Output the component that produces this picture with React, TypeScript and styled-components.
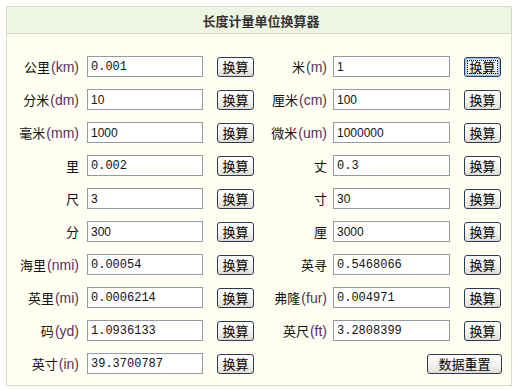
import styled, { createGlobalStyle, css } from 'styled-components';

const GlobalStyle = createGlobalStyle`
    html, body {
        margin: 0;
        padding: 0;
        background: #ffffff;
    }
`;

const Page = styled.div`
    padding: 6px 11px 0 6px;
    font-family: 'Liberation Sans', 'Noto Sans CJK SC', sans-serif;
`;

const Panel = styled.div`
    width: 504px;
    border: 1px solid #d3dcc8;
    background: #fffff2;
`;

const Header = styled.div`
    height: 26px;
    display: flex;
    align-items: center;
    justify-content: center;
    background: #eef6e2;
    border-bottom: 1px solid #cfdcc0;
    font-size: 13px;
    font-weight: bold;
    color: #333333;
    padding-left: 4px;
`;

const Grid = styled.div`
    display: grid;
    grid-template-columns: 80px 130px 41px 75px 131px 1fr;
    grid-auto-rows: 21px;
    row-gap: 12px;
    align-items: center;
    padding: 22px 0 11px 0;
`;

const Label = styled.div<{ $pad: number }>`
    text-align: right;
    padding-right: ${({ $pad }) => $pad}px;
    font-size: 13px;
    color: #111111;
    white-space: nowrap;
`;

const Unit = styled.span`
    color: #5c2e5c;
    font-size: 14px;
    margin-left: 1px;
`;

const Input = styled.input<{ $mono: boolean; $w: number }>`
    box-sizing: border-box;
    width: ${({ $w }) => $w}px;
    height: 21px;
    border: 1px solid #8f9ba6;
    background: #ffffff;
    padding: 0 3px;
    margin: 0;
    font-size: 12px;
    color: #111111;
    font-family: ${({ $mono }) =>
        $mono ? "'Liberation Mono', 'Noto Sans CJK SC', monospace" : "'Liberation Sans', sans-serif"};
    outline: none;
`;

const Button = styled.button<{ $focused?: boolean; $w?: number }>`
    box-sizing: border-box;
    width: ${({ $w }) => $w ?? 37}px;
    height: 20px;
    padding: 0;
    margin: 0;
    border: 1px solid #2c3b55;
    border-radius: 3px;
    background: linear-gradient(#ffffff, #f2f1ea 60%, #dedcd2);
    font-family: 'Noto Sans CJK SC', sans-serif;
    font-size: 13px;
    line-height: 18px;
    color: #000000;
    ${({ $focused }) =>
        $focused &&
        css`
            box-shadow: inset 0 0 0 1px #9cbef5, inset 0 0 0 2px #c7dbfb;
            outline: 1px dotted #000;
            outline-offset: -4px;
        `}
`;

const ResetCell = styled.div`
    grid-column: 4 / 7;
    display: flex;
    justify-content: flex-end;
    padding-right: 9px;
`;

type Item = { name: string; unit?: string; value: string };

const rows: [Item, Item][] = [
    [{ name: '公里', unit: '(km)', value: '0.001' }, { name: '米', unit: '(m)', value: '1' }],
    [{ name: '分米', unit: '(dm)', value: '10' }, { name: '厘米', unit: '(cm)', value: '100' }],
    [{ name: '毫米', unit: '(mm)', value: '1000' }, { name: '微米', unit: '(um)', value: '1000000' }],
    [{ name: '里', value: '0.002' }, { name: '丈', value: '0.3' }],
    [{ name: '尺', value: '3' }, { name: '寸', value: '30' }],
    [{ name: '分', value: '300' }, { name: '厘', value: '3000' }],
    [{ name: '海里', unit: '(nmi)', value: '0.00054' }, { name: '英寻', value: '0.5468066' }],
    [{ name: '英里', unit: '(mi)', value: '0.0006214' }, { name: '弗隆', unit: '(fur)', value: '0.004971' }],
    [{ name: '码', unit: '(yd)', value: '1.0936133' }, { name: '英尺', unit: '(ft)', value: '3.2808399' }],
];

function Cell({ item, pad, w, focused }: { item: Item; pad: number; w: number; focused?: boolean }) {
    return (
        <>
            <Label $pad={pad}>
                {item.name}
                {item.unit && <Unit>{item.unit}</Unit>}
            </Label>
            <div>
                <Input $w={w} $mono={item.value.includes('.')} defaultValue={item.value} />
            </div>
            <div>
                <Button $focused={focused}>换算</Button>
            </div>
        </>
    );
}

export default function App() {
    return (
        <Page>
            <GlobalStyle />
            <Panel>
                <Header>长度计量单位换算器</Header>
                <Grid>
                    {rows.flatMap(([l, r], i) => [
                        <Cell key={'l' + i} item={l} pad={8} w={116} />,
                        <Cell key={'r' + i} item={r} pad={6} w={117} focused={i === 0} />,
                    ])}
                    <Cell item={{ name: '英寸', unit: '(in)', value: '39.3700787' }} pad={8} w={116} />
                    <ResetCell>
                        <Button $w={75}>数据重置</Button>
                    </ResetCell>
                </Grid>
            </Panel>
        </Page>
    );
}
